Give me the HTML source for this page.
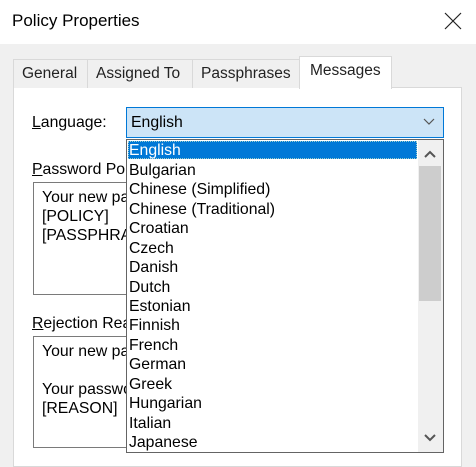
<!DOCTYPE html>
<html><head><style>
*{margin:0;padding:0;box-sizing:border-box}
body{width:476px;height:457px;overflow:hidden;background:#f0f0f0;font-family:"Liberation Sans",sans-serif;font-size:15.8px;color:#000;position:relative}
.a{position:absolute;white-space:nowrap}
.tab{position:absolute;top:59px;height:29px;border:1px solid #d9d9d9;border-bottom:none;background:#f0f0f0;padding:5px 0 0 9px;color:#222;font-size:15.5px}
.ta{position:absolute;background:#fff;border:1px solid #7a7a7a;padding:5px 0 0 8px;line-height:19px;overflow:hidden;white-space:nowrap}
.li{position:absolute;left:2px;height:19px;line-height:21px}
</style></head><body>
<div class="a" style="left:0;top:0;width:476px;height:44px;background:#fff"></div>
<div class="a" style="left:12px;top:11px;font-size:17px">Policy Properties</div>
<svg class="a" style="left:444px;top:12px" width="18" height="18"><path d="M1 1L17 17M17 1L1 17" stroke="#222" stroke-width="1.2"/></svg>
<div class="a" style="left:13px;top:87px;width:449px;height:380px;background:#fff;border:1px solid #d9d9d9"></div>
<div class="tab" style="left:13px;width:75px;padding-left:8px">General</div>
<div class="tab" style="left:87px;width:106px;padding-left:8px">Assigned To</div>
<div class="tab" style="left:192px;width:108px;padding-left:8px">Passphrases</div>
<div class="tab" style="left:299px;top:56px;height:33px;width:93px;background:#fff;border-color:#d9d9d9;padding:5px 0 0 10px">Messages</div>
<div class="a" style="left:32px;top:114px"><u>L</u>anguage:</div>
<div class="a" style="left:126px;top:107px;width:318px;height:31px;background:#cce4f7;border:1px solid #0078d7;padding:6px 0 0 4px">English</div>
<svg class="a" style="left:423px;top:118px" width="12" height="8"><path d="M1 1L6 6L11 1" stroke="#555" fill="none" stroke-width="1.2"/></svg>
<div class="a" style="left:32px;top:161px"><u>P</u>assword Policy</div>
<div class="ta" style="left:33px;top:182px;width:120px;height:113px">Your new password<br>[POLICY]<br>[PASSPHRASE]</div>
<div class="a" style="left:32px;top:315px"><u>R</u>ejection Reason</div>
<div class="ta" style="left:33px;top:336px;width:120px;height:112px">Your new password<br><br>Your password<br>[REASON]</div>
<div class="a" style="left:126px;top:139px;width:318px;height:314px;background:#fff;border:1px solid #646464;overflow:hidden">
<div class="a" style="left:1px;top:1px;width:289px;height:18px;background:#0078d7;border:1px dotted #9cc"></div>
<div class="li" style="top:0px;color:#fff">English</div>
<div class="li" style="top:20px">Bulgarian</div>
<div class="li" style="top:39.4px">Chinese (Simplified)</div>
<div class="li" style="top:58.9px">Chinese (Traditional)</div>
<div class="li" style="top:78.3px">Croatian</div>
<div class="li" style="top:97.7px">Czech</div>
<div class="li" style="top:117.1px">Danish</div>
<div class="li" style="top:136.6px">Dutch</div>
<div class="li" style="top:156px">Estonian</div>
<div class="li" style="top:175.4px">Finnish</div>
<div class="li" style="top:194.9px">French</div>
<div class="li" style="top:214.3px">German</div>
<div class="li" style="top:233.7px">Greek</div>
<div class="li" style="top:253.1px">Hungarian</div>
<div class="li" style="top:272.6px">Italian</div>
<div class="li" style="top:292px">Japanese</div>
<div class="a" style="left:291px;top:0;width:25px;height:312px;background:#f0f0f0"></div>
<div class="a" style="left:292px;top:26px;width:22px;height:135px;background:#cdcdcd"></div>
<svg class="a" style="left:296px;top:10px" width="14" height="9"><path d="M2 7L7 2L12 7" stroke="#555" fill="none" stroke-width="2"/></svg>
<svg class="a" style="left:296px;top:293px" width="14" height="9"><path d="M2 2L7 7L12 2" stroke="#555" fill="none" stroke-width="2"/></svg>
</div>
</body></html>
